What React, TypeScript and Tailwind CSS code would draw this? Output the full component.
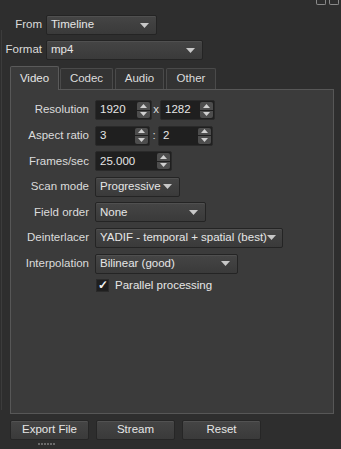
import React from "react";

const Arrow = () => (
  <svg width="9" height="5" viewBox="0 0 9 5" className="shrink-0">
    <polygon points="0,0 9,0 4.5,5" fill="#c8c8c8" />
  </svg>
);

type ComboProps = { value: string; width: string };

const Combo = ({ value, width }: ComboProps) => (
  <div
    className={`${width} h-[20px] flex items-center justify-between pl-[4px] pr-[7px] rounded-[2px] border border-[#242424] bg-gradient-to-b from-[#454545] to-[#3a3a3a] text-[#e6e6e6] shadow-[inset_0_1px_0_#505050] whitespace-nowrap`}
  >
    <span>{value}</span>
    <Arrow />
  </div>
);

type SpinProps = { value: string; width: string };

const Spin = ({ value, width }: SpinProps) => (
  <div className={`${width} h-[20px] flex rounded-[2px] border border-[#2a2a2a] bg-[#1f1f1f]`}>
    <div className="flex-1 flex items-center pl-[4px] text-[#e6e6e6]">{value}</div>
    <div className="w-[14px] flex flex-col gap-[1px] py-[1px] pr-[1px]">
      <div className="flex-1 flex items-center justify-center rounded-t-[2px] bg-[#4d4d4d]">
        <svg width="7" height="4" viewBox="0 0 7 4">
          <polygon points="0,4 7,4 3.5,0" fill="#d0d0d0" />
        </svg>
      </div>
      <div className="flex-1 flex items-center justify-center rounded-b-[2px] bg-[#4d4d4d]">
        <svg width="7" height="4" viewBox="0 0 7 4">
          <polygon points="0,0 7,0 3.5,4" fill="#d0d0d0" />
        </svg>
      </div>
    </div>
  </div>
);

type RowProps = { label: string; children: React.ReactNode };

const Row = ({ label, children }: RowProps) => (
  <div className="flex items-center h-[20px]">
    <div className="w-[84px] text-right text-[#dcdcdc] pr-[6px] whitespace-nowrap">{label}</div>
    {children}
  </div>
);

const Tab = ({ label, active }: { label: string; active?: boolean }) =>
  active ? (
    <div className="w-[49px] h-[24px] flex items-center justify-center border border-b-0 border-[#5a5a5a] rounded-t-[2px] bg-[#3b3b3b] text-[#e6e6e6] -mb-[1px] relative z-10">
      {label}
    </div>
  ) : (
    <div className="h-[21px] flex items-center justify-center border border-b-0 border-[#4a4a4a] rounded-t-[2px] bg-[#333333] text-[#dcdcdc]">
      {label}
    </div>
  );

const Button = ({ label }: { label: string }) => (
  <div className="w-[79px] h-[20px] flex items-center justify-center rounded-[2px] border border-[#262626] bg-gradient-to-b from-[#454545] to-[#3a3a3a] text-[#e6e6e6] shadow-[inset_0_1px_0_#525252]">
    {label}
  </div>
);

export default function App() {
  return (
    <div
      className="w-[341px] h-[449px] bg-[#2e2e2e] text-[11.5px] overflow-hidden relative"
      style={{ fontFamily: '"Liberation Sans", Arial, sans-serif' }}
    >
      <div className="absolute right-[2px] top-0 flex gap-[3px]">
        <div className="w-[10px] h-[5px] border border-t-0 border-[#8a8a8a] rounded-b-[2px]" />
        <div className="w-[10px] h-[5px] border border-t-0 border-[#8a8a8a] rounded-b-[2px]" />
      </div>
      <div className="absolute left-[1px] top-[30px] w-[1px] h-[380px] bg-[#3c3c3c]" />

      <div className="pt-[15px] flex flex-col gap-[5px]">
        <div className="flex items-center">
          <div className="w-[46px] text-right pr-[4px] text-[#dcdcdc]">From</div>
          <Combo value="Timeline" width="w-[111px]" />
        </div>
        <div className="flex items-center">
          <div className="w-[46px] text-right pr-[4px] text-[#dcdcdc]">Format</div>
          <Combo value="mp4" width="w-[157px]" />
        </div>
      </div>

      <div className="ml-[10px] mt-[6px] w-[324px]">
        <div className="flex items-end gap-[1px] h-[23px]">
          <Tab label="Video" active />
          <div className="w-[53px]">
            <Tab label="Codec" />
          </div>
          <div className="w-[49px] ml-[1px]">
            <Tab label="Audio" />
          </div>
          <div className="w-[50px] ml-[1px]">
            <Tab label="Other" />
          </div>
        </div>
        <div className="h-[325px] border border-[#575757] bg-[#3b3b3b] pt-[10px] flex flex-col gap-[5.6px]">
          <Row label="Resolution">
            <Spin value="1920" width="w-[57px]" />
            <span className="w-[8px] text-center text-[#dcdcdc]">x</span>
            <Spin value="1282" width="w-[55px]" />
          </Row>
          <Row label="Aspect ratio">
            <Spin value="3" width="w-[55px]" />
            <span className="w-[8px] text-center text-[#dcdcdc]">:</span>
            <Spin value="2" width="w-[55px]" />
          </Row>
          <Row label="Frames/sec">
            <Spin value="25.000" width="w-[77px]" />
          </Row>
          <Row label="Scan mode">
            <Combo value="Progressive" width="w-[85px]" />
          </Row>
          <Row label="Field order">
            <Combo value="None" width="w-[111px]" />
          </Row>
          <Row label="Deinterlacer">
            <Combo value="YADIF - temporal + spatial (best)" width="w-[188px]" />
          </Row>
          <Row label="Interpolation">
            <Combo value="Bilinear (good)" width="w-[143px]" />
          </Row>
          <div className="flex items-center h-[16px] pl-[85px] -mt-[2px]">
            <div className="w-[13px] h-[13px] bg-[#1f1f1f] border border-[#2a2a2a] flex items-center justify-center text-[#f4f4f4] text-[12px] font-bold leading-none">
              ✓
            </div>
            <span className="ml-[6px] text-[#e6e6e6]">Parallel processing</span>
          </div>
        </div>
      </div>

      <div className="ml-[10px] mt-[6px] flex gap-[7px]">
        <Button label="Export File" />
        <Button label="Stream" />
        <Button label="Reset" />
      </div>
      <div className="ml-[38px] mt-[3px] flex gap-[1px]">
        {[0, 1, 2, 3, 4, 5].map((i) => (
          <div key={i} className="w-[2px] h-[2px] bg-[#6a6a6a]" />
        ))}
      </div>
    </div>
  );
}
